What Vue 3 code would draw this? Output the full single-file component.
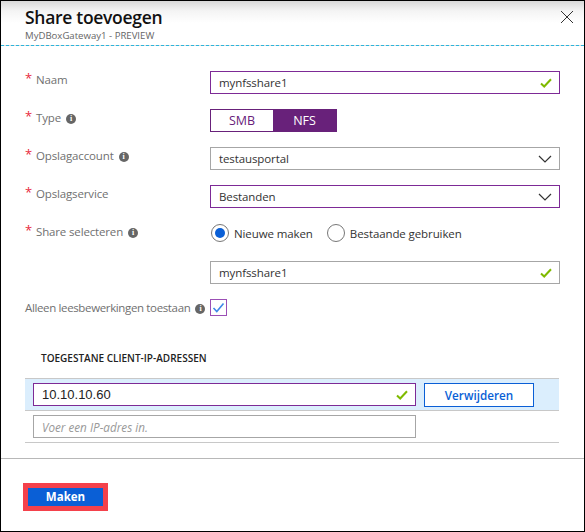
<script setup>
</script>

<template>
  <div class="blade">
    <header class="head">
      <div class="titles">
        <h1 class="title">Share toevoegen</h1>
        <div class="sub">MyDBoxGateway1 - PREVIEW</div>
      </div>
      <svg class="close" width="14" height="14" viewBox="0 0 14 14"><path d="M1 1L13 13M13 1L1 13" stroke="#333" stroke-width="1" fill="none"/></svg>
    </header>

    <main class="form">
      <div class="row">
        <div class="label"><span class="req">*</span>Naam</div>
        <div class="field active"><span class="val">mynfsshare1</span>
          <svg class="ok" width="12" height="10" viewBox="0 0 12 10"><path d="M1 5.5L4.2 8.5L11 1.2" stroke="#7fba00" stroke-width="2" fill="none"/></svg>
        </div>
      </div>
      <div class="row">
        <div class="label"><span class="req">*</span>Type<i class="info">i</i></div>
        <div class="seg"><span class="opt">SMB</span><span class="opt on">NFS</span></div>
      </div>
      <div class="row">
        <div class="label"><span class="req">*</span>Opslagaccount<i class="info">i</i></div>
        <div class="field"><span class="val">testausportal</span>
          <svg class="chev" width="14" height="8" viewBox="0 0 14 8"><path d="M1 1L7 7L13 1" stroke="#333" stroke-width="1.2" fill="none"/></svg>
        </div>
      </div>
      <div class="row">
        <div class="label"><span class="req">*</span>Opslagservice</div>
        <div class="field active"><span class="val">Bestanden</span>
          <svg class="chev" width="14" height="8" viewBox="0 0 14 8"><path d="M1 1L7 7L13 1" stroke="#333" stroke-width="1.2" fill="none"/></svg>
        </div>
      </div>
      <div class="row">
        <div class="label"><span class="req">*</span>Share selecteren<i class="info">i</i></div>
        <div class="radios">
          <span class="radio sel"></span><span class="rtext">Nieuwe maken</span>
          <span class="radio"></span><span class="rtext">Bestaande gebruiken</span>
        </div>
      </div>
      <div class="row">
        <div class="label"></div>
        <div class="field"><span class="val">mynfsshare1</span>
          <svg class="ok" width="12" height="10" viewBox="0 0 12 10"><path d="M1 5.5L4.2 8.5L11 1.2" stroke="#7fba00" stroke-width="2" fill="none"/></svg>
        </div>
      </div>
      <div class="row">
        <div class="label plain">Alleen leesbewerkingen toestaan<i class="info">i</i></div>
        <div class="check">
          <svg width="13" height="11" viewBox="0 0 13 11"><path d="M1.5 6L4.8 9.5L11.5 1.5" stroke="#3f88e8" stroke-width="1.6" fill="none"/></svg>
        </div>
      </div>

      <h2 class="ips">TOEGESTANE CLIENT-IP-ADRESSEN</h2>
      <div class="iprow sel">
        <div class="field active ip"><span class="val ipval">10.10.10.60</span>
          <svg class="ok" width="12" height="10" viewBox="0 0 12 10"><path d="M1 5.5L4.2 8.5L11 1.2" stroke="#7fba00" stroke-width="2" fill="none"/></svg>
        </div>
        <button class="del">Verwijderen</button>
      </div>
      <div class="iprow">
        <div class="field ip"><span class="ph">Voer een IP-adres in.</span></div>
      </div>
    </main>

    <footer class="foot">
      <button class="make">Maken</button>
    </footer>
  </div>
</template>

<style scoped>
.blade {
  width: 585px;
  height: 532px;
  box-sizing: border-box;
  border: 1px solid #000;
  background: #fff;
  font-family: "Open Sans", "Noto Sans", sans-serif;
  font-size: 11.5px;
  letter-spacing: -0.1px;
  color: #333;
  display: flex;
  flex-direction: column;
  overflow: hidden;
}
.head {
  height: 44px;
  border-bottom: 1px dashed #2bb5dc;
  background: linear-gradient(#d8d8d8 0, #f4f4f4 10px, #fff 22px);
  display: flex;
  justify-content: space-between;
  padding: 0 10px 0 24px;
  flex: none;
}
.title {
  margin: 4px 0 0;
  font-size: 17.5px;
  font-weight: 600;
  letter-spacing: -0.3px;
  line-height: 24px;
  color: #111;
}
.sub {
  font-size: 9.6px;
  letter-spacing: 0;
  line-height: 12px;
  color: #666;
  margin-top: 1px;
}
.close { margin-top: 9px; }
.form {
  padding: 25px 24px 0;
  flex: 1;
}
.row {
  display: flex;
  height: 23px;
  margin-bottom: 15px;
}
.label {
  width: 185px;
  flex: none;
  color: #707070;
  line-height: 18px;
  letter-spacing: -0.15px;
  white-space: nowrap;
  display: flex;
  align-items: flex-start;
}
.label.plain { letter-spacing: -0.36px; }
.req {
  color: #e8283c;
  font-size: 13px;
  line-height: 15px;
  width: 11px;
  flex: none;
}
.info {
  width: 10px;
  height: 10px;
  margin: 5px 0 0 5px;
  border-radius: 50%;
  background: #666;
  color: #fff;
  font: bold 8px/10px "Liberation Serif", serif;
  text-align: center;
  flex: none;
}
.field {
  width: 350px;
  height: 23px;
  box-sizing: border-box;
  border: 1px solid #a6a6a6;
  background: #fff;
  display: flex;
  align-items: center;
  justify-content: space-between;
  padding: 0 7px 0 8px;
}
.field.active { border-color: #7d2a96; }
.val { color: #333; }
.seg {
  width: 127px;
  height: 23px;
  box-sizing: border-box;
  border: 1px solid #68217a;
  display: flex;
}
.opt {
  width: 62px;
  text-align: center;
  color: #68217a;
  line-height: 21px;
  font-size: 12.5px;
}
.opt.on {
  flex: 1;
  background: #68217a;
  color: #fff;
}
.radios {
  display: flex;
  align-items: center;
  height: 20px;
  color: #333;
}
.radio {
  width: 18px;
  height: 18px;
  box-sizing: border-box;
  border: 1px solid #777;
  border-radius: 50%;
  margin-left: 1px;
  position: relative;
  flex: none;
}
.radio.sel::after {
  content: "";
  position: absolute;
  left: 3px;
  top: 3px;
  width: 10px;
  height: 10px;
  border-radius: 50%;
  background: #0a5fd6;
}
.rtext { margin: 0 13px 0 5px; }
.check {
  width: 17px;
  height: 17px;
  box-sizing: border-box;
  border: 1px solid #9b4fb5;
  display: flex;
  align-items: center;
  justify-content: center;
}
.ips {
  margin: 29px 0 0 16px;
  font-size: 10px;
  letter-spacing: 0;
  font-weight: 600;
  line-height: 14px;
  color: #222;
}
.iprow {
  width: 534px;
  height: 32px;
  border-bottom: 1px solid #c8c8c8;
  display: flex;
  align-items: center;
  padding-left: 8px;
  box-sizing: border-box;
  gap: 8px;
}
.iprow.sel {
  margin-top: 13px;
  height: 33px;
  background: #dbeefd;
  border-top: 1px solid #c8c8c8;
}
.field.ip { width: 383px; }
.ipval { font-family: "Liberation Sans", sans-serif; font-size: 13px; letter-spacing: 0; color: #222; }
.ph { font-style: italic; color: #999; font-size: 11.7px; letter-spacing: 0; }
.del {
  width: 110px;
  height: 24px;
  border: 1px solid #0a5fd6;
  background: #fff;
  color: #0a5fd6;
  font: 600 11.7px "Open Sans", sans-serif;
  padding: 0;
}
.foot {
  flex: none;
  height: 73px;
  box-sizing: border-box;
  border-top: 1px solid #b8b8b8;
  padding: 24px 0 0 22px;
}
.make {
  display: block;
  width: 85px;
  height: 28px;
  box-sizing: border-box;
  border: 5px solid #f4414b;
  background: #0a5fd6;
  color: #fff;
  font: 700 11.5px/18px "Open Sans", sans-serif;
  padding: 0;
}
</style>
